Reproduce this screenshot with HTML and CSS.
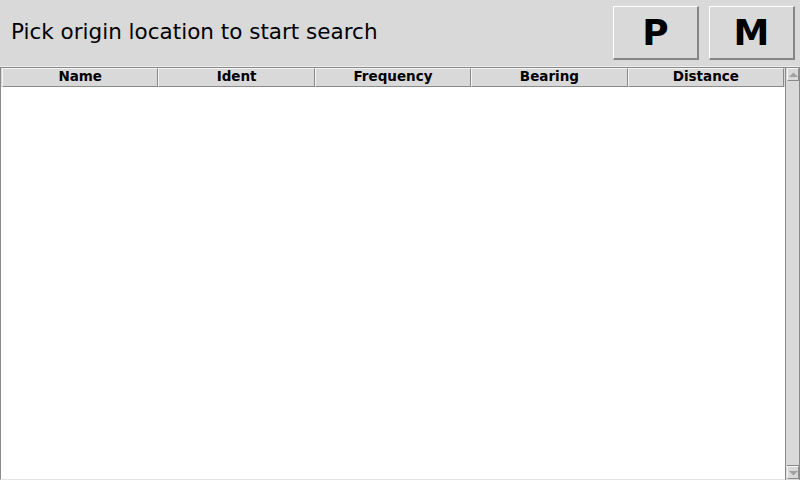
FILE: index.html
```html
<!DOCTYPE html>
<html>
<head>
<meta charset="utf-8">
<link rel="stylesheet" href="styles.css">
</head>
<body>
<div class="app">
  <header class="topbar">
    <div class="title">Pick origin location to start search</div>
    <div class="btns">
      <button class="bigbtn">P</button>
      <button class="bigbtn">M</button>
    </div>
  </header>
  <main class="listarea">
    <div class="table">
      <div class="thead">
        <div class="th">Name</div>
        <div class="th">Ident</div>
        <div class="th">Frequency</div>
        <div class="th">Bearing</div>
        <div class="th">Distance</div>
      </div>
      <div class="tbody"></div>
    </div>
    <div class="scrollbar">
      <div class="arrow up"><svg width="9" height="6" viewBox="0 0 9 6"><polygon points="0,5 9,5 4.5,0.5" fill="#a0a0a0"/></svg></div>
      <div class="trough"></div>
      <div class="arrow down"><svg width="9" height="6" viewBox="0 0 9 6"><polygon points="0,1 9,1 4.5,5.5" fill="#a0a0a0"/></svg></div>
    </div>
  </main>
</div>
</body>
</html>
```
FILE: styles.css
```css
html, body {
  margin: 0;
  padding: 0;
  width: 800px;
  height: 480px;
  overflow: hidden;
  background: #d9d9d9;
  font-family: "DejaVu Sans", sans-serif;
}
.app {
  display: flex;
  flex-direction: column;
  height: 480px;
}
.topbar {
  height: 66px;
  display: flex;
  align-items: flex-start;
  justify-content: space-between;
  box-sizing: border-box;
}
.title {
  padding-left: 11px;
  margin-top: 19px;
  font-size: 21.5px;
  line-height: 26px;
  color: #000;
}
.btns {
  display: flex;
  gap: 10px;
  padding-top: 6px;
  padding-right: 5px;
}
.bigbtn {
  width: 86px;
  height: 54px;
  box-sizing: border-box;
  background: #d9d9d9;
  border-top: 1px solid #ffffff;
  border-left: 1px solid #ffffff;
  border-right: 2px solid #858585;
  border-bottom: 2px solid #858585;
  margin: 0;
  padding: 0;
  font-family: "DejaVu Sans", sans-serif;
  font-weight: bold;
  font-size: 36px;
  line-height: 50px;
  color: #000;
}
.listarea {
  flex: 1;
  display: flex;
  border-top: 1px solid #ededed;
  background: #fff;
}
.table {
  flex: 1;
  display: flex;
  flex-direction: column;
  border-left: 1px solid #8a8a8a;
  border-top: 1px solid #8a8a8a;
  border-bottom: 1px solid #e4e4e4;
}
.thead {
  display: flex;
  height: 19px;
  padding-left: 1px;
  padding-right: 1px;
  background: #d9d9d9;
}
.th {
  flex: 1;
  box-sizing: border-box;
  border-top: 1px solid #f4f4f4;
  border-left: 1px solid #f4f4f4;
  border-right: 1px solid #8a8a8a;
  border-bottom: 1px solid #8a8a8a;
  font-weight: bold;
  font-size: 13.5px;
  line-height: 15px;
  text-align: center;
  color: #000;
}
.tbody {
  flex: 1;
  background: #fff;
}
.scrollbar {
  width: 12px;
  display: flex;
  flex-direction: column;
  background: #d9d9d9;
  border-left: 1px solid #8a8a8a;
  border-right: 1px solid #8a8a8a;
  border-top: 1px solid #8a8a8a;
  padding-left: 1px;
}
.arrow {
  height: 13px;
  box-sizing: border-box;
  border-top: 1px solid #f4f4f4;
  border-left: 1px solid #f4f4f4;
  border-right: 1px solid #8a8a8a;
  border-bottom: 1px solid #8a8a8a;
  display: flex;
  align-items: center;
  justify-content: center;
}
.arrow svg { display: block; }
.trough {
  flex: 1;
  border-bottom: 1px solid #8a8a8a;
}
.arrow.down {
  margin-bottom: 1px;
}
```
